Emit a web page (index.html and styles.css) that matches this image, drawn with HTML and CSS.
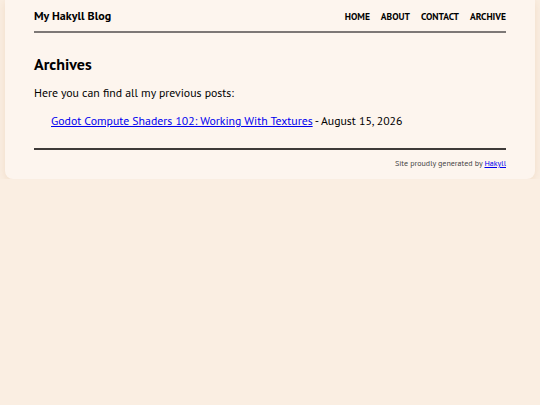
FILE: index.html
```html
<!DOCTYPE html>
<html lang="en">
<head>
  <meta charset="UTF-8" />
  <meta name="viewport" content="width=device-width, initial-scale=1.0" />
  <title>My Hakyll Blog - Archives</title>
  <link rel="stylesheet" href="styles.css">
</head>
<body>
  <div class="page">
    <header class="header">
      <div class="logo"><a href="#">My Hakyll Blog</a></div>
      <nav class="nav">
        <a href="#">Home</a>
        <a href="#">About</a>
        <a href="#">Contact</a>
        <a href="#">Archive</a>
      </nav>
    </header>

    <main>
      <h1>Archives</h1>
      <p>Here you can find all my previous posts:</p>
      <ul class="posts">
        <li><a href="#">Godot Compute Shaders 102: Working With Textures</a> - August 15, 2026</li>
      </ul>
    </main>

    <footer class="footer">
      Site proudly generated by <a href="#">Hakyll</a>
    </footer>
  </div>
</body>
</html>
```

FILE: styles.css
```css
body {
  margin: 0;
  background: #faeee2;
  color: #000;
  font-family: "PT Sans", Lato, "Noto Sans", sans-serif;
}

.page {
  margin: 0 5px;
  padding: 0 29px 11px 29px;
  background: #fdf5ee;
  border-radius: 0 0 8px 8px;
  box-shadow: 0 2px 8px #f0dcc8;
}

.header {
  display: flex;
  justify-content: space-between;
  align-items: baseline;
  height: 33px;
  padding-top: 4px;
  box-sizing: border-box;
  border-bottom: 2px solid #7d7876;
}

.logo a {
  color: #000;
  font-size: 12px;
  line-height: 16px;
  font-weight: bold;
  text-decoration: none;
}

.nav {
  display: flex;
  gap: 11px;
}

.nav a {
  color: #000;
  font-size: 9.5px;
  line-height: 16px;
  font-weight: bold;
  text-transform: uppercase;
  text-decoration: none;
}

h1 {
  font-size: 16px;
  line-height: 18px;
  margin: 22px 0 13px 0;
}

p {
  font-size: 11.8px;
  line-height: 14px;
  margin: 0 0 14px 0;
}

.posts {
  font-size: 11.8px;
  line-height: 14px;
  margin: 0;
  padding: 0 0 0 17px;
  list-style: none;
}

.posts a {
  color: #0000ee;
}

.footer {
  margin-top: 20px;
  padding-top: 8px;
  border-top: 2px solid #3e3a38;
  font-size: 8px;
  line-height: 10px;
  color: #444;
  text-align: right;
}

.footer a {
  color: #0000ee;
}
```
